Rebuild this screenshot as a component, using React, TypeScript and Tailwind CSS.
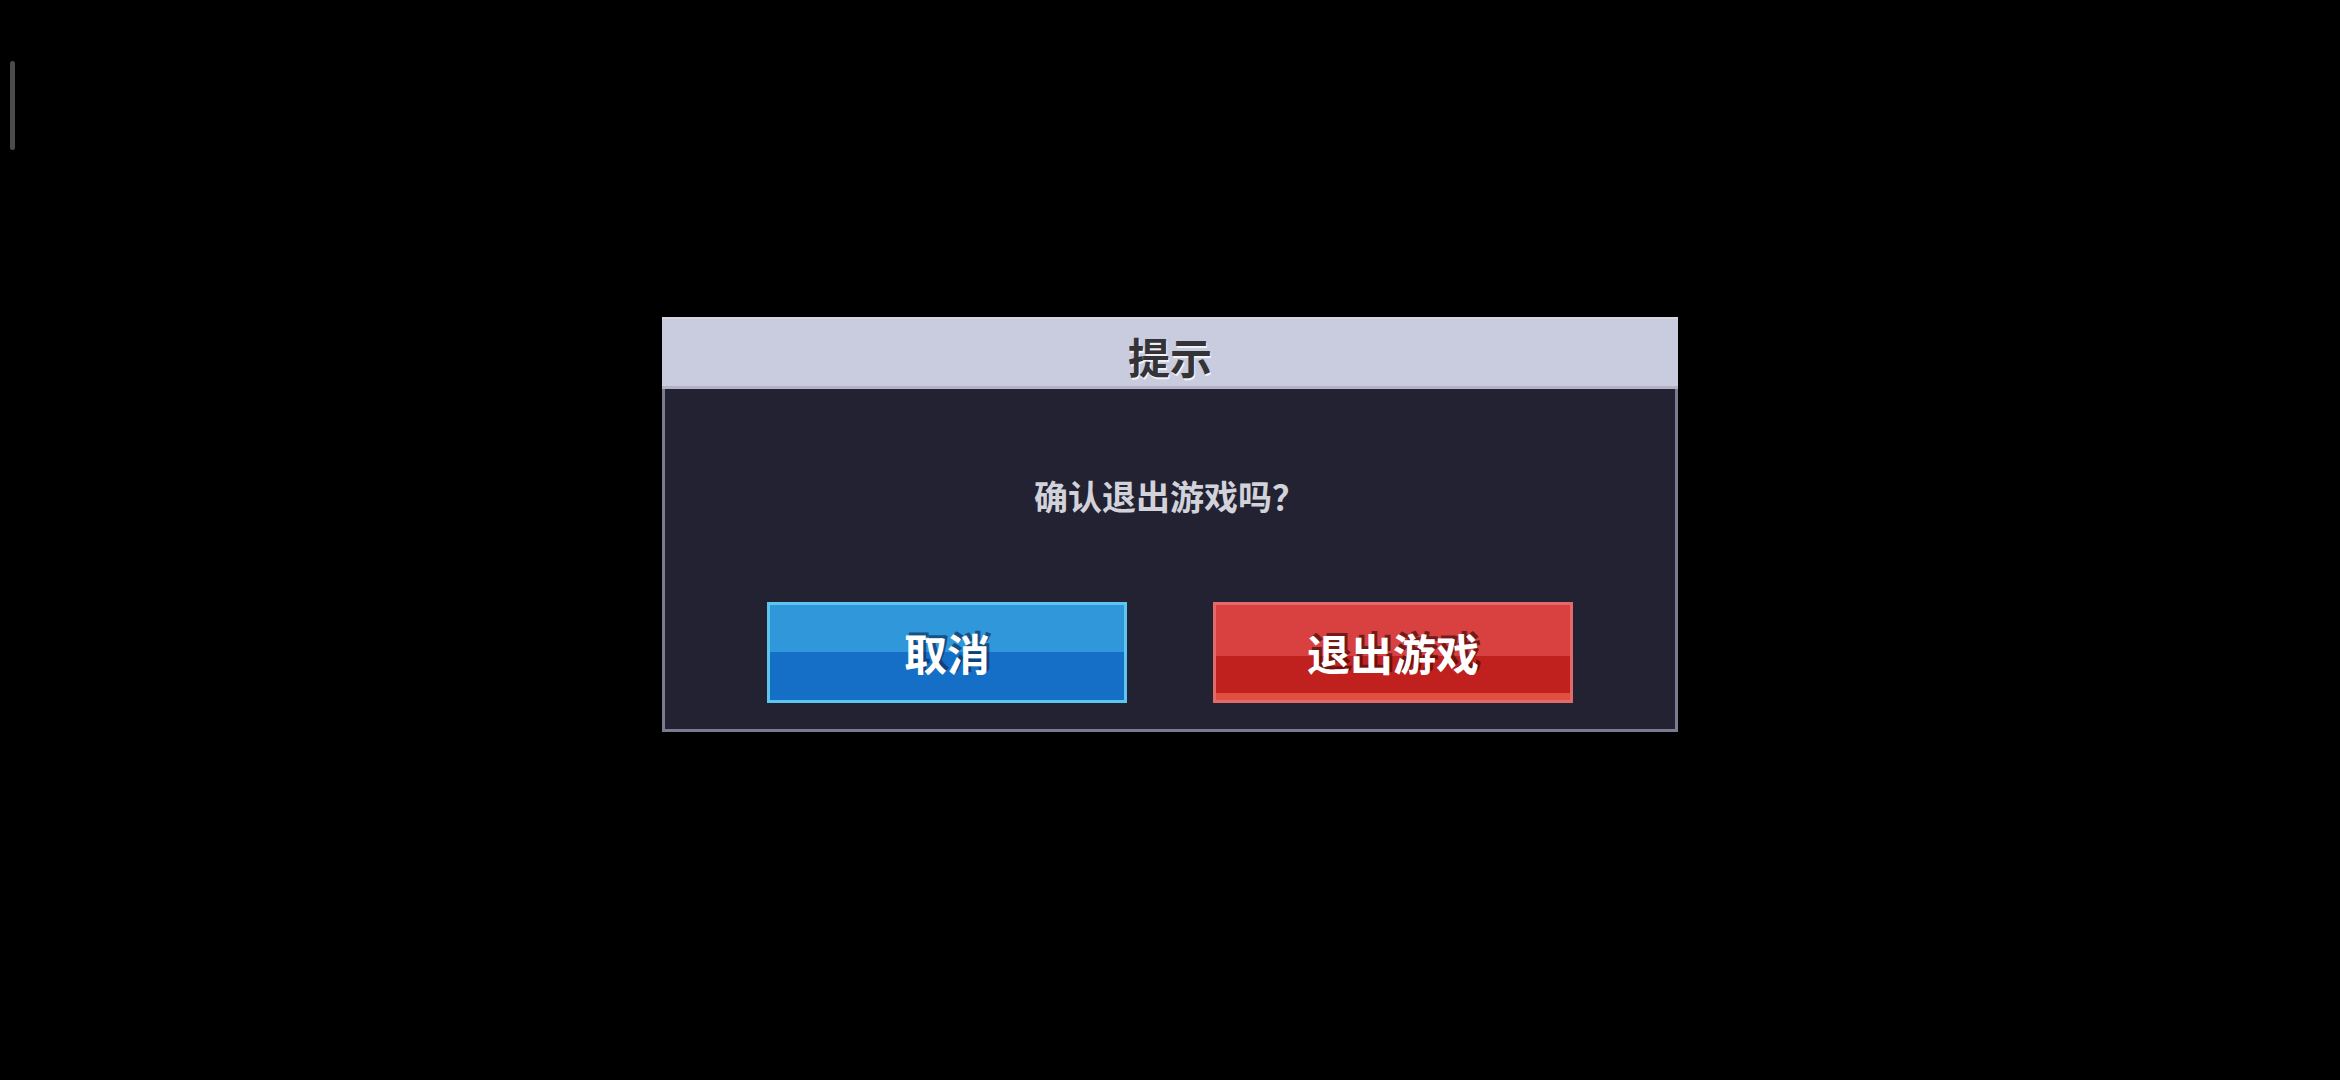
import React from 'react';

const font = { fontFamily: '"Noto Sans CJK SC", "Noto Sans", sans-serif' };

const App: React.FC = () => {
  return (
    <div className="relative w-[2340px] h-[1080px] bg-black overflow-hidden" style={font}>
      {/* scroll hint at left edge */}
      <div className="absolute left-[10px] top-[61px] w-[5px] h-[89px] rounded-full bg-[#4b4b4b]" />

      <div className="flex justify-center pt-[317px]">
        <div className="w-[1016px] flex flex-col">
          {/* Header */}
          <div className="h-[69px] bg-[#c9cbdf] border-t-[2px] border-[#d6d6de] flex items-center justify-center">
            <span className="text-[42px] leading-none font-bold text-[#333338] pt-[6px] [text-shadow:1px_2px_0_#f2f2f6]">
              提示
            </span>
          </div>
          <div className="h-[3px] bg-[#b2b2c4]" />

          {/* Body */}
          <div className="h-[343px] bg-[#222232] border-x-[3px] border-b-[3px] border-[#7b7b8f] flex flex-col items-center">
            <p className="mt-[90px] text-[34px] leading-none font-bold text-[#d2d2da]">确认退出游戏吗？</p>

            <div className="mt-[89px] flex gap-[86px]">
              <button className="w-[360px] h-[101px] border-[3px] border-[#5cc6ee] bg-[linear-gradient(to_bottom,#2f97da_0%,#2f97da_49%,#166fc7_49%,#166fc7_100%)] flex items-center justify-center">
                <span className="text-[43px] leading-none font-bold text-white [text-shadow:3px_-3px_0_rgba(10,40,80,0.65)]">
                  取消
                </span>
              </button>
              <button className="w-[360px] h-[101px] border-[3px] border-[#e46a6a] bg-[linear-gradient(to_bottom,#d94141_0%,#d94141_54%,#c0211f_54%,#c0211f_93%,#e0503f_93%,#e0503f_100%)] flex items-center justify-center">
                <span className="text-[43px] leading-none font-bold text-white [text-shadow:3px_-3px_0_rgba(70,10,10,0.7)]">
                  退出游戏
                </span>
              </button>
            </div>
          </div>
        </div>
      </div>
    </div>
  );
};

export default App;
